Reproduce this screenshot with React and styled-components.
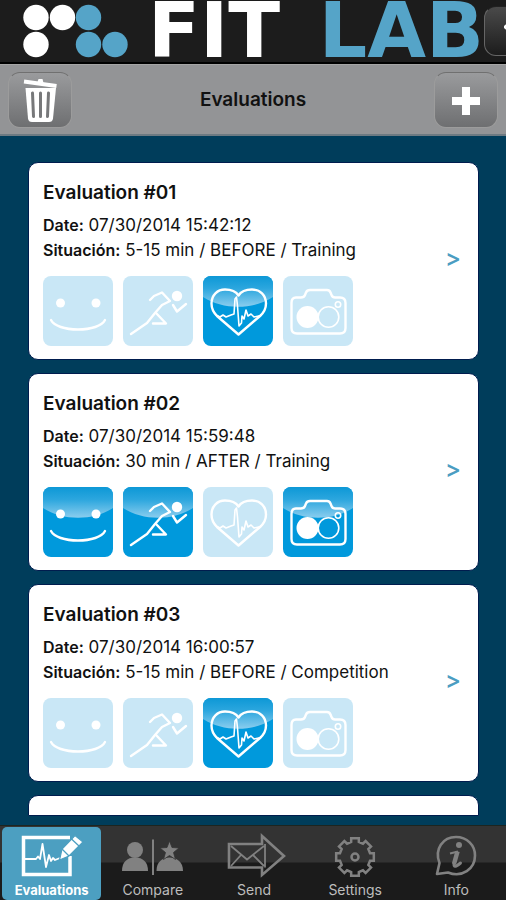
import React, { useState } from "react";
import styled, { createGlobalStyle } from "styled-components";

const GlobalStyles = createGlobalStyle`
    * {
        box-sizing: border-box;
    }

    body {
        margin: 0;
        background-color: #003d5b;
        font-family: "Inter", "Liberation Sans", sans-serif;
        color: #111;
    }

    button {
        font: inherit;
        cursor: pointer;
    }
`;

const Screen = styled.div`
    display: flex;
    flex-direction: column;
    height: 100vh;
    overflow: hidden;
`;

const Header = styled.header`
    display: flex;
    align-items: center;
    height: 64px;
    flex-shrink: 0;
    overflow-x: clip;
    background-color: #1c1c1c;
    border-bottom: 2px solid #000;
`;

const Logo = styled.div`
    display: flex;
    align-items: center;
    flex: 1;
    min-width: 0;
    gap: 20px;
    padding-left: 23px;

    svg {
        flex-shrink: 0;
    }
`;

const Wordmark = styled.div`
    display: flex;
    flex: 1;
    justify-content: space-between;
    font-family: "DejaVu Sans", sans-serif;
    font-size: 76px;
    font-weight: 700;
    line-height: 62px;
    color: #fff;
`;

const WordmarkBlue = styled.span`
    color: #55a4c8;
`;

const HeaderButton = styled.button`
    display: flex;
    align-items: center;
    flex-shrink: 0;
    width: 64px;
    height: 50px;
    margin-right: -42px;
    padding: 0 0 0 19px;
    border: 1px solid #666;
    border-top-color: #222;
    border-radius: 12px;
    background: linear-gradient(#4a4a4a, #1c1c1c);
`;

const Toolbar = styled.div`
    display: flex;
    align-items: center;
    justify-content: space-between;
    height: 72px;
    flex-shrink: 0;
    padding: 0 8px;
    background-color: #939496;
    border-top: 1px solid #a5a5a5;
    border-bottom: 2px solid #6d7a82;
`;

const PageTitle = styled.h1`
    margin: 0;
    font-size: 19px;
    font-weight: 600;
    line-height: 24px;
`;

const ToolButton = styled.button`
    display: flex;
    width: 64px;
    height: 56px;
    padding: 0;
    border: 1px solid #9c9c9c;
    border-top-color: #707070;
    border-radius: 12px;
    background: linear-gradient(#9a9b9d, #6e6f71);
`;

const Content = styled.main`
    flex: 1;
    min-height: 0;
    padding: 26px 27px 9px 28px;
    background-color: #003d5b;
`;

const List = styled.ul`
    display: flex;
    flex-direction: column;
    gap: 13px;
    height: 100%;
    margin: 0;
    padding: 0;
    list-style: none;
    overflow: hidden auto;
`;

const ListItem = styled.li`
    flex-shrink: 0;
`;

const Card = styled.a`
    display: flex;
    align-items: center;
    justify-content: space-between;
    padding: 15px 17px 13px 14px;
    border: 1px solid #001c4e;
    border-radius: 10px;
    background-color: #fff;
    color: #111;
    text-decoration: none;
`;

const NextCard = styled.li`
    flex: 1;
    border: 1px solid #001c4e;
    border-radius: 10px 10px 0 0;
    background-color: #fff;
`;

const CardTitle = styled.h2`
    margin: 0 0 5px;
    font-size: 19px;
    font-weight: 600;
    line-height: 30px;
`;

const Detail = styled.p`
    margin: 0;
    font-size: 17px;
    line-height: 25px;
`;

const Label = styled.strong`
    font-size: 16px;
    font-weight: 600;
`;

const Tiles = styled.div`
    display: flex;
    gap: 10px;
    margin-top: 13px;
`;

const Tile = styled.svg`
    display: block;
    width: 70px;
    height: 70px;
    border-radius: 8px;
    background-color: ${({ $active }) => ($active ? "#0099dc" : "#c9e7f6")};
`;

const Chevron = styled.span`
    padding-bottom: 8px;
    font-size: 24px;
    font-weight: 500;
    line-height: 24px;
    color: #4b9dc2;
`;

const Nav = styled.nav`
    display: grid;
    grid-template-columns: repeat(5, 1fr);
    height: 75px;
    flex-shrink: 0;
    padding-top: 1px;
    border-top: 1px solid #1d2520;
    background: linear-gradient(#333 36px, #1b1b1b 37px);
`;

const NavItem = styled.a`
    display: flex;
    flex-direction: column;
    align-items: center;
    margin: 0 0 0 2px;
    padding-top: 5px;
    border-radius: 5px;
    background-color: ${({ $active }) => ($active ? "#4c9fc1" : "transparent")};
    color: ${({ $active }) => ($active ? "#fff" : "#bdbdbd")};
    font-size: ${({ $active }) => ($active ? "13px" : "14px")};
    font-weight: ${({ $active }) => ($active ? 700 : 400)};
    line-height: 18px;
    text-decoration: none;

    svg {
        display: block;
        color: ${({ $active }) => ($active ? "#fff" : "#818181")};
    }
`;

const drawings = {
    mood: (
        <>
            <circle cx="17.5" cy="27" r="4.5" fill="#fff" stroke="none" />
            <circle cx="53" cy="27" r="4.5" fill="#fff" stroke="none" />
            <path d="M8 44C11 50 22 53.5 35 53.5S59 50 62 44" />
        </>
    ),
    runner: (
        <>
            <circle cx="54" cy="20" r="5.2" fill="#fff" stroke="none" />
            <path d="M27 24L31 20L39 16.5L47 25L39 29L32 37L24 47L8 58" />
            <path d="M33 37L43 47.5H30M50 29L54 35.5L63 28" />
        </>
    ),
    heart: (
        <>
            <path d="M35.5 58.5L14 40C9 35 8.5 31.5 8.5 27.5C8.5 19 14.5 13.5 22 13.5C28 13.5 33 15.5 35.5 19.5C38 15.5 43 13.5 49 13.5C57 13.5 63 19 63 27.5C63 33 61 36.5 57 40Z" />
            <path
                strokeWidth="1.6"
                d="M13 39L17 41L20 39L23 41L28 39L31 38L32 23L33.5 21L34.5 30L36 50L38.5 47L39 40L41 43L43 34L45 40L48 38L51 41L58 39.5"
            />
        </>
    ),
    camera: (
        <>
            <path d="M13 21.5H18Q21 21.5 22 19L23 16.5Q24 14 27 14H44Q46.5 14 47.5 16.5L48.5 19Q49.5 21.5 52 21.5H57Q62.5 21.5 62.5 27V52Q62.5 57.5 57 57.5H14Q8.5 57.5 8.5 52V27Q8.5 21.5 13 21.5Z" />
            <circle cx="24.5" cy="41" r="11" fill="#fff" stroke="none" />
            <circle cx="45.5" cy="41" r="10.3" strokeWidth="1.6" />
            <circle cx="55" cy="28.5" r="2.7" strokeWidth="1.6" />
        </>
    ),
};

const testNames = ["mood", "runner", "heart", "camera"];

const evaluations = [
    { id: "01", date: "07/30/2014 15:42:12", situation: "5-15 min / BEFORE / Training", done: ["heart"] },
    { id: "02", date: "07/30/2014 15:59:48", situation: "30 min / AFTER / Training", done: ["mood", "runner", "camera"] },
    { id: "03", date: "07/30/2014 16:00:57", situation: "5-15 min / BEFORE / Competition", done: ["heart"] },
];

const TestTile = ({ name, active }) => (
    <Tile $active={active} viewBox="0 0 70 70" aria-hidden="true">
        {active && (
            <>
                <defs>
                    <linearGradient id="gloss" x1="0" y1="0" x2="0" y2="1">
                        <stop offset="0" stopColor="#0d98d6" />
                        <stop offset="0.4" stopColor="#2ba6de" />
                        <stop offset="1" stopColor="#8acdee" />
                    </linearGradient>
                </defs>
                <path d="M0 0H70V21C50 34 20 34 0 21Z" fill="url(#gloss)" />
            </>
        )}
        <g fill="none" stroke="#fff" strokeWidth="2.4" strokeLinecap="round" strokeLinejoin="round">
            {drawings[name]}
        </g>
    </Tile>
);

// Outline of the settings cog, eight square teeth round the centre
const gearPath = () => {
    const points = [];
    for (let i = 0; i < 8; i++) {
        const a = (i * 45 - 90) * (Math.PI / 180);
        [[-0.25, 15.5], [-0.2, 19.2], [0.2, 19.2], [0.25, 15.5]].forEach(([d, r]) => {
            points.push(`${(32 + Math.cos(a + d) * r).toFixed(2)} ${(25 + Math.sin(a + d) * r).toFixed(2)}`);
        });
    }
    return `M${points.join("L")}Z`;
};

const navIcons = {
    evaluations: (
        <g fill="none" stroke="currentColor">
            <path strokeWidth="3.5" d="M50 24V42.5H3.5V5.5H50" />
            <path strokeWidth="1.8" strokeLinejoin="round" d="M5 27H16L18 24.5L20 27L22.5 12L26 35L29 23L31 29L33 26L35 28L40 26" />
            <path fill="currentColor" stroke="#4c9fc1" strokeWidth="1.2" d="M39.5 28L42 17L55 3.5L63 10L49 24Z" />
            <path stroke="#4c9fc1" strokeWidth="1.3" d="M42 17L49 24M51.5 7L59 14" />
        </g>
    ),
    compare: (
        <g fill="currentColor">
            <circle cx="14" cy="18" r="8" />
            <path d="M1 39C1 30 6 25.5 14 25.5S27 30 27 39Z" />
            <path d="M31 7.5H33V43H31Z" />
            <path d="M35.5 39C35.5 30 41 25.5 48.5 25.5S62 30 62 39Z" />
            <path stroke="#333" strokeWidth="0.8" d="M48.5 9L51 15.5L58 16L52.5 20.5L54.5 27.5L48.5 23.5L42.5 27.5L44.5 20.5L39 16L46 15.5Z" />
        </g>
    ),
    send: (
        <g fill="none" stroke="currentColor" strokeWidth="2.6">
            <path d="M40 12H7V35.5H40V43L62 24L40 4Z" />
            <path strokeWidth="1.8" d="M9 14L25 27.5L42 14M9 34L19 23M31 23L42 34M43 12V35.5" />
        </g>
    ),
    settings: (
        <g fill="none" stroke="currentColor" strokeWidth="2.5">
            <path d={gearPath()} />
            <circle cx="32" cy="25" r="3.5" />
        </g>
    ),
    info: (
        <g>
            <path
                fill="none"
                stroke="currentColor"
                strokeWidth="2.6"
                strokeLinejoin="round"
                d="M13 42L15.5 31C10 17 19 5 32 5C43 5 51 13 51 23.5C51 37 38 46 24 40.5Z"
            />
            <circle cx="35" cy="13" r="3" fill="currentColor" />
            <path fill="none" stroke="currentColor" strokeWidth="2" d="M26 21.5L34 19.5" />
            <path fill="none" stroke="currentColor" strokeWidth="4.5" d="M33.5 19.5L30 32" />
            <path fill="none" stroke="currentColor" strokeWidth="3" strokeLinecap="round" d="M30 32Q29.500 37 36.500 31" />
        </g>
    ),
};

const navItems = [
    { key: "evaluations", label: "Evaluations" },
    { key: "compare", label: "Compare" },
    { key: "send", label: "Send" },
    { key: "settings", label: "Settings" },
    { key: "info", label: "Info" },
];

const EvaluationCard = ({ evaluation }) => (
    <ListItem>
        <Card href={`#evaluation-${evaluation.id}`}>
            <div>
                <CardTitle>Evaluation #{evaluation.id}</CardTitle>
                <Detail><Label>Date:</Label> {evaluation.date}</Detail>
                <Detail><Label>Situación:</Label> {evaluation.situation}</Detail>
                <Tiles>
                    {testNames.map((name) => (
                        <TestTile key={name} name={name} active={evaluation.done.includes(name)} />
                    ))}
                </Tiles>
            </div>
            <Chevron>&gt;</Chevron>
        </Card>
    </ListItem>
);

const App = () => {
    const [tab, setTab] = useState("evaluations");

    return (
        <Screen>
            <GlobalStyles />
            <Header>
                <Logo>
                    <svg width="105" height="54" viewBox="0 0 105 54" aria-hidden="true">
                        <g fill="#fff">
                            <circle cx="13" cy="13.5" r="12.7" />
                            <circle cx="39.5" cy="13.5" r="12.7" />
                            <circle cx="13" cy="40.5" r="12.7" />
                        </g>
                        <g fill="#55a4c8">
                            <circle cx="65.5" cy="13.5" r="12.7" />
                            <circle cx="65.5" cy="40.5" r="12.7" />
                            <circle cx="92" cy="40.5" r="12.7" />
                        </g>
                    </svg>
                    <Wordmark>
                        <span>FIT</span>
                        <WordmarkBlue>LAB</WordmarkBlue>
                    </Wordmark>
                </Logo>
                <HeaderButton aria-label="Back">
                    <svg width="26" height="26" viewBox="0 0 26 26" fill="none" stroke="#fff" strokeWidth="4">
                        <path d="M10 2L2 9L10 16M3 9H22V22" />
                    </svg>
                </HeaderButton>
            </Header>

            <Toolbar>
                <ToolButton aria-label="Delete">
                    <svg width="62" height="54" viewBox="0 0 62 54" aria-hidden="true">
                        <path d="M15 8.5L47.5 13" stroke="#fff" strokeWidth="4" />
                        <path d="M28.5 9L29.5 6H33.5L34.5 10Z" fill="#fff" />
                        <path d="M16.5 15H47L44 45.5Q43.5 49 40 49H23Q19.5 49 19 45.5Z" fill="#fff" />
                        <path d="M23.5 20L24.5 43.5M31.5 20V43.5M39.5 20L38.5 43.5" stroke="#77787a" strokeWidth="3" strokeLinecap="round" />
                    </svg>
                </ToolButton>
                <PageTitle>Evaluations</PageTitle>
                <ToolButton aria-label="Add evaluation">
                    <svg width="62" height="54" viewBox="0 0 62 54" aria-hidden="true">
                        <path d="M31 14V42M17 28H45" stroke="#fff" strokeWidth="8" />
                    </svg>
                </ToolButton>
            </Toolbar>

            <Content>
                <List>
                    {evaluations.map((evaluation) => (
                        <EvaluationCard key={evaluation.id} evaluation={evaluation} />
                    ))}
                    <NextCard aria-hidden="true" />
                </List>
            </Content>

            <Nav>
                {navItems.map(({ key, label }) => (
                    <NavItem key={key} href={`#${key}`} $active={tab === key} onClick={() => setTab(key)}>
                        <svg width="64" height="49" viewBox="0 0 64 49" aria-hidden="true">
                            {navIcons[key]}
                        </svg>
                        {label}
                    </NavItem>
                ))}
            </Nav>
        </Screen>
    );
};

export default App;
